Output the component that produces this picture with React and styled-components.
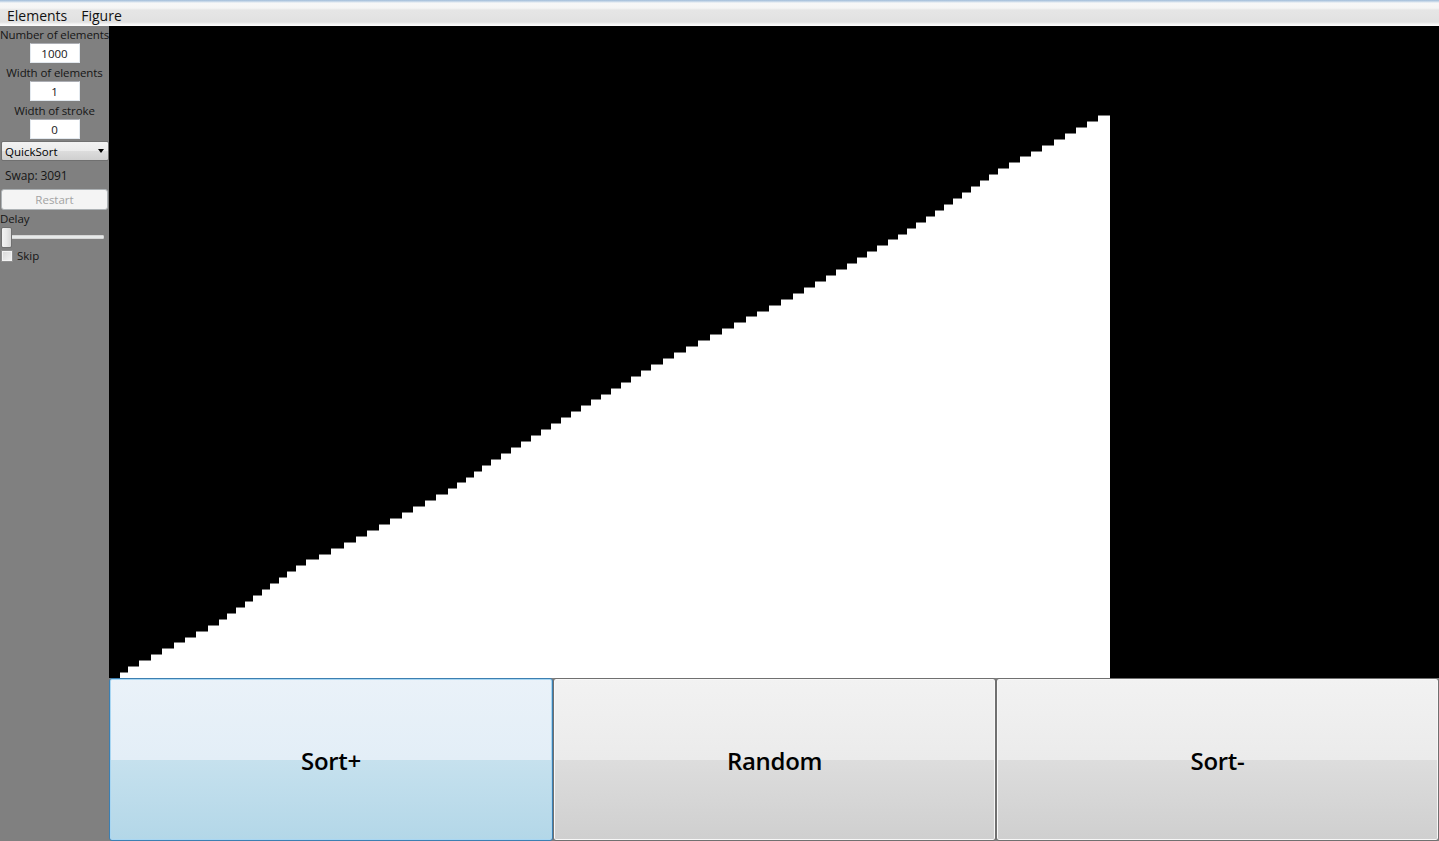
import styled, { createGlobalStyle } from "styled-components";

const GlobalStyle = createGlobalStyle`
  html, body {
    margin: 0;
    padding: 0;
    overflow: hidden;
    background: #808080;
  }
  * { box-sizing: border-box; }
`;

const Window = styled.div`
  width: 1439px;
  height: 841px;
  display: flex;
  flex-direction: column;
  font-family: "Open Sans", "Noto Sans", sans-serif;
  color: #161616;
`;

const MenuBar = styled.div`
  height: 26px;
  display: flex;
  align-items: flex-end;
  padding: 0 0 1px 0;
  background: linear-gradient(
    to bottom,
    #9fbbd8 0px,
    #d6e2ee 2px,
    #f7f7f7 3px,
    #f5f5f5 8px,
    #e6e6e6 10px,
    #e1e1e1 22px,
    #f4f4f4 24px,
    #ffffff 26px
  );
`;

const MenuItem = styled.div`
  padding: 0 7px;
  font-size: 14px;
  line-height: 18px;
  color: #111;
`;

const Body = styled.div`
  flex: 1;
  display: flex;
  min-height: 0;
`;

const Sidebar = styled.div`
  width: 109px;
  background: #808080;
  display: flex;
  flex-direction: column;
  align-items: stretch;
  padding-top: 1px;
  font-size: 11.5px;
`;

const Label = styled.div`
  text-align: ${(p) => (p.$left ? "left" : "center")};
  padding-left: ${(p) => p.$indent || 0}px;
  line-height: 15px;
  white-space: nowrap;
  letter-spacing: -0.1px;
  margin-top: ${(p) => p.$top || 0}px;
  font-size: ${(p) => p.$size || 11.5}px;
`;

const TextBox = styled.div`
  align-self: center;
  width: 50px;
  height: 20px;
  background: #fff;
  border: 1px solid #e3e9ef;
  border-top-color: #abadb3;
  display: flex;
  align-items: center;
  justify-content: center;
  font-size: 11.5px;
  margin: 1px 0 2px;
`;

const Combo = styled.div`
  margin: 0 0 0 1px;
  height: 20px;
  border: 1px solid #707070;
  border-radius: 2px;
  background: linear-gradient(to bottom, #f2f2f2 0%, #ebebeb 50%, #dddddd 50%, #cfcfcf 100%);
  display: flex;
  align-items: center;
  justify-content: space-between;
  padding: 0 4px 0 3px;
  font-size: 11.5px;
  color: #000;
`;

const Arrow = styled.span`
  width: 0;
  height: 0;
  border-left: 3.5px solid transparent;
  border-right: 3.5px solid transparent;
  border-top: 4px solid #000;
`;

const RestartButton = styled.div`
  margin: 6px 1px 0 1px;
  height: 21px;
  border: 1px solid #adb2b5;
  border-radius: 3px;
  background: #f4f4f4;
  color: #a3a3a3;
  display: flex;
  align-items: center;
  justify-content: center;
  font-size: 11.5px;
`;

const Slider = styled.div`
  position: relative;
  height: 21px;
  margin: 1px 0 0 1px;
`;

const Track = styled.div`
  position: absolute;
  left: 9px;
  right: 5px;
  top: 8px;
  height: 4px;
  border: 1px solid #d6d6d6;
  background: #e7eaea;
  border-radius: 1px;
`;

const Thumb = styled.div`
  position: absolute;
  left: 0;
  top: 0;
  width: 11px;
  height: 21px;
  border: 1px solid #707070;
  border-radius: 2px;
  background: linear-gradient(to right, #f3f3f3 0%, #e8e8e8 50%, #d6d6d6 100%);
`;

const CheckRow = styled.div`
  display: flex;
  align-items: center;
  gap: 4px;
  margin: 0 0 0 1px;
  font-size: 11.5px;
`;

const CheckBox = styled.div`
  width: 12px;
  height: 12px;
  border: 1px solid #8f8f8f;
  background: linear-gradient(135deg, #d8d8d8 0%, #f5f5f5 100%);
  box-shadow: inset 0 0 0 1px #f4f4f4;
`;

const Main = styled.div`
  flex: 1;
  display: flex;
  flex-direction: column;
`;

const Canvas = styled.div`
  height: 652px;
  background: #000;
  overflow: hidden;
`;

const ButtonRow = styled.div`
  flex: 1;
  display: grid;
  grid-template-columns: 444px 443px 443px;
`;

const BigButton = styled.div`
  border: 1px solid ${(p) => (p.$hot ? "#3c7fb1" : "#707070")};
  border-radius: 3px;
  box-shadow: inset 0 0 0 1px ${(p) => (p.$hot ? "#a8d6f2" : "#f8f8f8")};
  background: ${(p) =>
    p.$hot
      ? "linear-gradient(to bottom, #eaf2f9 0%, #e3eef7 50%, #c6e1ee 50%, #b3d7e8 100%)"
      : "linear-gradient(to bottom, #f2f2f2 0%, #ebebeb 50%, #dddddd 50%, #cfcfcf 100%)"};
  display: flex;
  align-items: center;
  justify-content: center;
  padding-top: 2px;
  font-size: 24px;
  font-weight: 600;
  letter-spacing: -0.3px;
  color: #000;
`;

// sorted bars, read off the reference curve
const curve = [
  [110, 678], [119, 678], [120, 673], [218, 622], [300, 565], [347, 543],
  [450, 490], [490, 462], [650, 367], [800, 292], [843, 268], [900, 235],
  [1000, 170], [1103, 115], [1109, 115],
];
const STEP = 563 / 95;

const yAt = (x) => {
  for (let i = 1; i < curve.length; i++) {
    const [x0, y0] = curve[i - 1];
    const [x1, y1] = curve[i];
    if (x <= x1) return y0 + ((x - x0) / (x1 - x0)) * (y1 - y0);
  }
  return curve[curve.length - 1][1];
};

const runs = (() => {
  const out = [];
  for (let i = 0; i < 1000; i++) {
    const x = 110 + i;
    const v = Math.round((678 - yAt(x)) / STEP);
    const last = out[out.length - 1];
    if (last && last.v === v) last.w += 1;
    else out.push({ x: x - 109, w: 1, v });
  }
  return out;
})();

const Bars = () => (
  <svg width="1330" height="652" shapeRendering="crispEdges">
    {runs
      .filter((r) => r.v > 0)
      .map((r) => {
        const h = Math.round(r.v * STEP);
        const top = 652 - h;
        return (
          <g key={r.x}>
            <rect x={r.x} y={top} width={r.w} height={h} fill="#fff" />
            <rect x={r.x} y={top} width={r.w} height={1} fill="#7c7c7c" />
          </g>
        );
      })}
  </svg>
);

const App = () => {
  return (
    <>
      <GlobalStyle />
      <Window>
        <MenuBar>
          <MenuItem>Elements</MenuItem>
          <MenuItem>Figure</MenuItem>
        </MenuBar>
        <Body>
          <Sidebar>
            <Label>Number of elements</Label>
            <TextBox>1000</TextBox>
            <Label>Width of elements</Label>
            <TextBox>1</TextBox>
            <Label>Width of stroke</Label>
            <TextBox>0</TextBox>
            <Combo>
              QuickSort
              <Arrow />
            </Combo>
            <Label $left $indent={5} $top={7} $size={12}>Swap: 3091</Label>
            <RestartButton>Restart</RestartButton>
            <Label $left $top={1}>Delay</Label>
            <Slider>
              <Track />
              <Thumb />
            </Slider>
            <CheckRow>
              <CheckBox />
              Skip
            </CheckRow>
          </Sidebar>
          <Main>
            <Canvas>
              <Bars />
            </Canvas>
            <ButtonRow>
              <BigButton $hot>Sort+</BigButton>
              <BigButton>Random</BigButton>
              <BigButton>Sort-</BigButton>
            </ButtonRow>
          </Main>
        </Body>
      </Window>
    </>
  );
};

export default App;
